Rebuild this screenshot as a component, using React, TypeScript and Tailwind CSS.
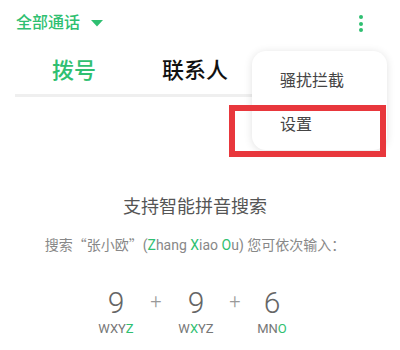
import React from 'react';

const GREEN = 'text-[#2fbf71]';

function KeyColumn({ digit, letters, hit, width }: { digit: string; letters: string; hit: number; width: string }) {
  return (
    <div className={`flex flex-col items-center ${width}`}>
      <div className="text-[30px] leading-[36px] font-light text-[#666]">{digit}</div>
      <div className="text-[13px] leading-[16px] text-[#777]">
        {letters.split('').map((ch, i) => (
          <span key={i} className={i === hit ? GREEN : ''}>
            {ch}
          </span>
        ))}
      </div>
    </div>
  );
}

function Plus({ width }: { width: string }) {
  return (
    <div className={`flex ${width} justify-center`}>
      <span className="mt-[4px] text-[20px] leading-[24px] font-light text-[#999]">+</span>
    </div>
  );
}

export default function App() {
  return (
    <div className="relative h-[350px] w-[400px] overflow-hidden bg-white font-[Roboto,'Noto_Sans_CJK_SC',sans-serif]">
      {/* top bar */}
      <div className="flex h-[46px] items-center pl-[16px] pr-[37px]">
        <span className={`text-[16px] font-medium ${GREEN}`}>全部通话</span>
        <svg className="ml-[11px] mt-[1px]" width="12" height="7" viewBox="0 0 12 7">
          <polygon points="0,0 12,0 6,6.5" fill="#2fbf71" />
        </svg>
        <div className="ml-auto flex flex-col items-center gap-[2.5px] pt-[1px]">
          <span className="h-[4px] w-[4px] rounded-full bg-[#2fbf71]" />
          <span className="h-[4px] w-[4px] rounded-full bg-[#2fbf71]" />
          <span className="h-[4px] w-[4px] rounded-full bg-[#2fbf71]" />
        </div>
      </div>

      {/* tabs */}
      <div className="flex h-[48px] items-center">
        <span className={`ml-[52px] text-[22px] font-medium ${GREEN}`}>拨号</span>
        <span className="ml-[66px] text-[22px] font-medium text-[#111]">联系人</span>
      </div>
      <div className="mx-[15px] h-[3px] bg-[#efefef]" />

      {/* hint */}
      <div className="flex flex-col items-center pr-[10px]">
        <div className="mt-[97px] text-[18px] leading-[26px] text-[#555]">支持智能拼音搜索</div>
        <div className="mt-[14px] text-[14px] leading-[20px] text-[#888]">
          搜索<span className="font-['Noto_Sans_CJK_SC']">“</span>张小欧<span className="font-['Noto_Sans_CJK_SC']">”</span>(<span className={GREEN}>Z</span>hang{' '}
          <span className={GREEN}>X</span>iao <span className={GREEN}>O</span>u) 您可依次输入：
        </div>
      </div>

      <div className="mt-[30px] ml-[96px] flex">
        <KeyColumn digit="9" letters="WXYZ" hit={3} width="w-[40px]" />
        <Plus width="w-[40px]" />
        <KeyColumn digit="9" letters="WXYZ" hit={1} width="w-[40px]" />
        <Plus width="w-[38px]" />
        <KeyColumn digit="6" letters="MNO" hit={2} width="w-[36px]" />
      </div>

      {/* overflow menu */}
      <div className="absolute left-[252px] top-[51px] flex h-[99px] w-[135px] flex-col rounded-[14px] bg-white shadow-[0_1px_8px_rgba(0,0,0,0.12)]">
        <div className="flex h-[56px] items-center pl-[28px] pt-[3px] text-[16px] text-[#444]">骚扰拦截</div>
        <div className="flex h-[36px] items-center pl-[28px] text-[16px] text-[#444]">设置</div>
      </div>

      {/* highlight box */}
      <div className="absolute left-[229px] top-[105px] h-[52px] w-[157px] border-[6px] border-[#e8373c]" />
    </div>
  );
}
